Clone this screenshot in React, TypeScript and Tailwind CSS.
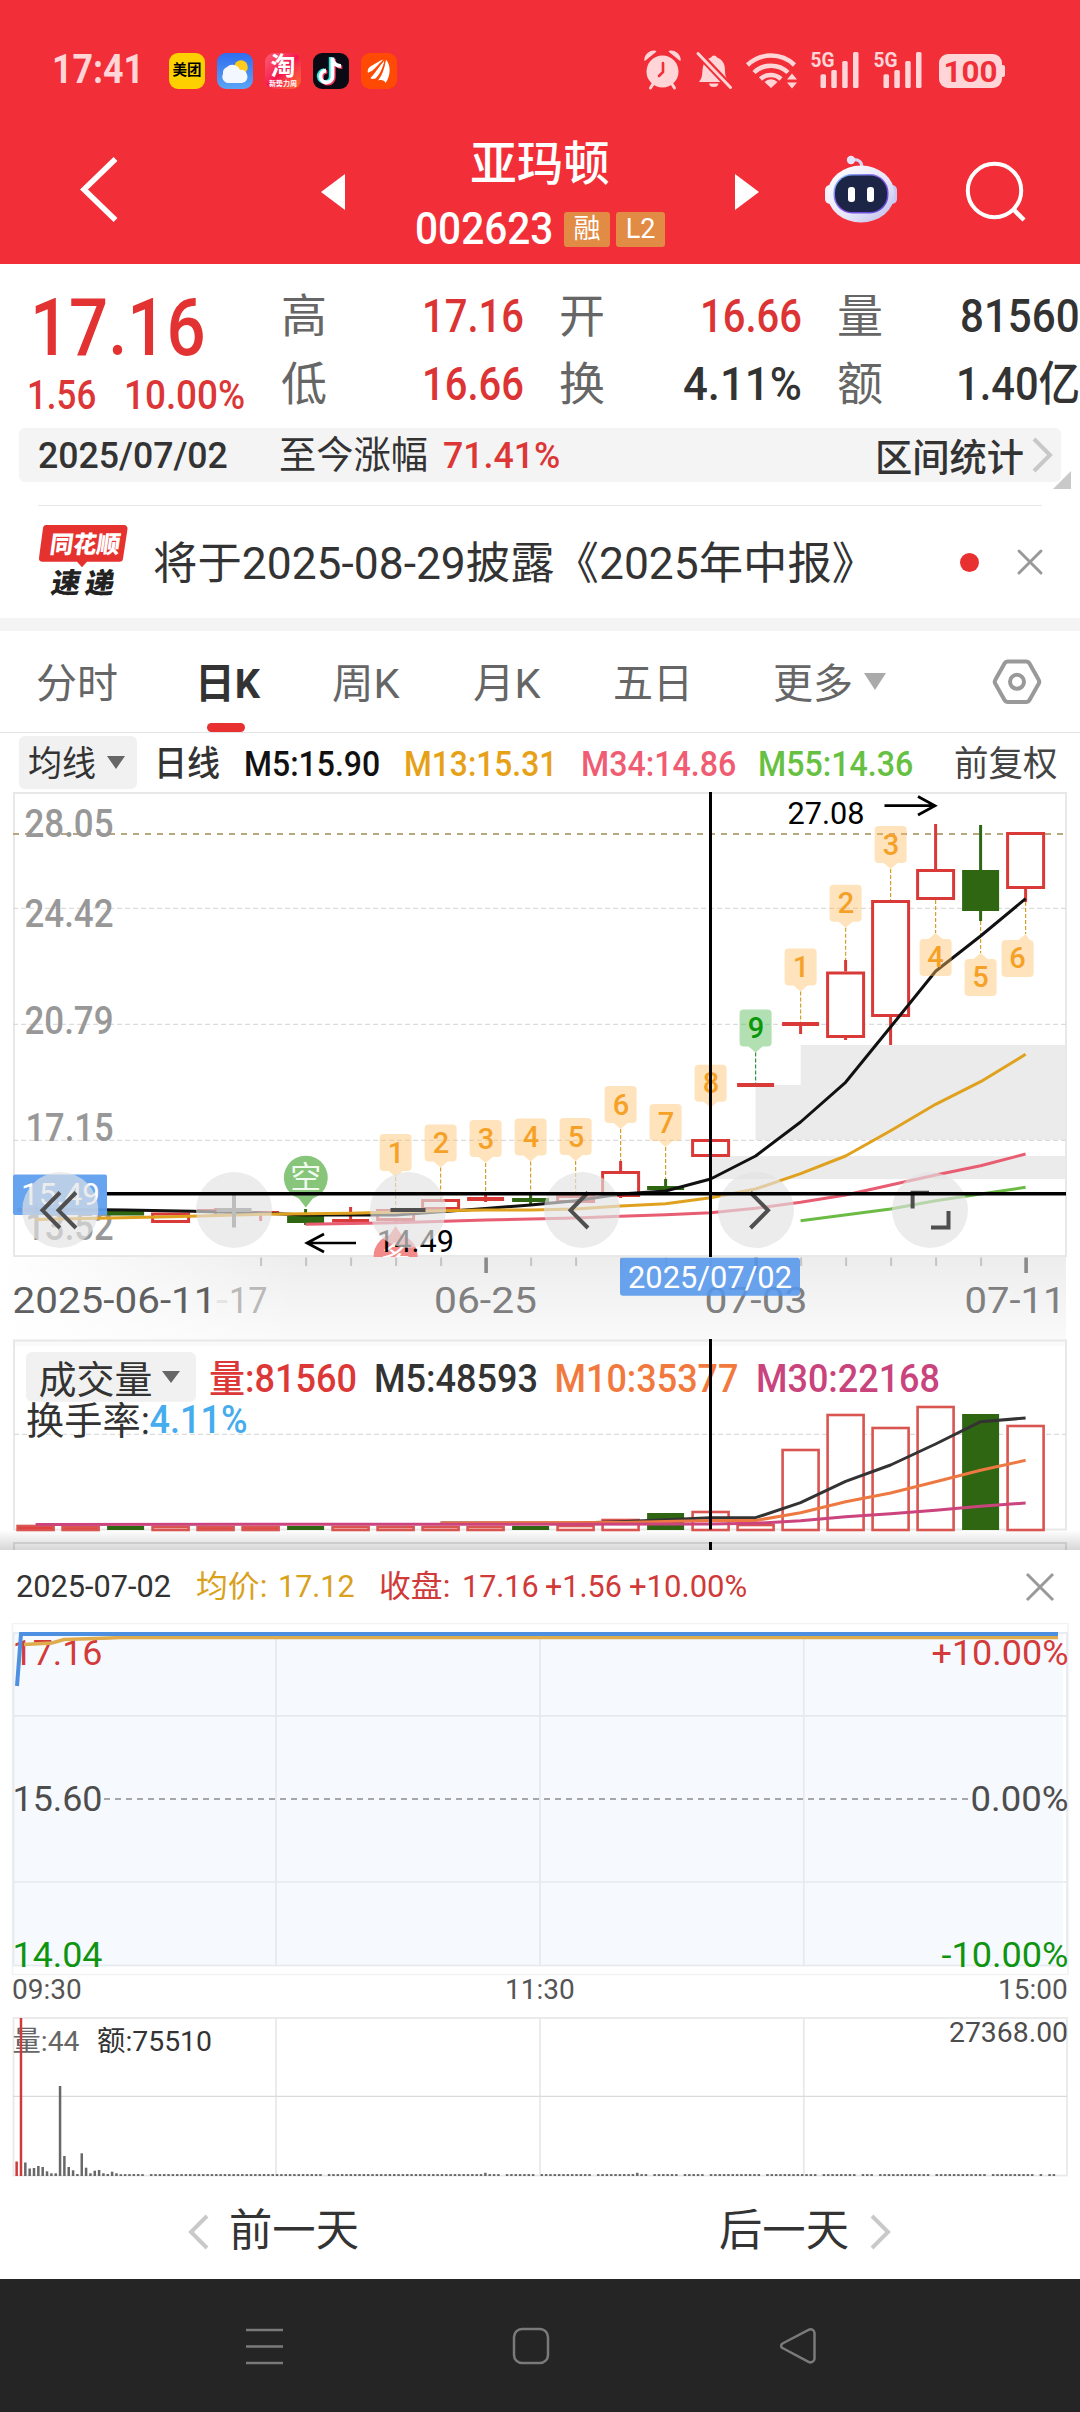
import { useLayoutEffect, useRef, useState, type ReactNode } from "react";

/** Text squeezed horizontally so that it fills a given width. */
function Fit({ w, className = "", children }: { w: number; className?: string; children: ReactNode }) {
  const ref = useRef<HTMLSpanElement>(null);
  const [scale, setScale] = useState(1);
  useLayoutEffect(() => {
    if (ref.current) setScale(w / ref.current.offsetWidth);
  }, [w]);
  return (
    <span className={`inline-flex shrink-0 ${className}`} style={{ width: w }}>
      <span ref={ref} className="inline-block shrink-0 origin-left whitespace-nowrap" style={{ transform: `scaleX(${scale})` }}>
        {children}
      </span>
    </span>
  );
}

type TProps = { x: number; y: number; s: number; w?: number; fill?: string; weight?: number; anchor?: "start" | "middle" | "end"; o?: number; children: string };
function T({ x, y, s, w, fill = "#333", weight = 400, anchor = "start", o = 1, children }: TProps) {
  return (
    <text x={x} y={y} fontSize={s} fill={fill} fontWeight={weight} textAnchor={anchor} opacity={o} {...(w ? { textLength: w, lengthAdjust: "spacingAndGlyphs" } : {})}>
      {children}
    </text>
  );
}

function StatusBar() {
  return (
    <div className="flex h-[124px] items-start pt-[53px]">
      <Fit w={92} className="ml-[52px] text-[40px] leading-[34px] font-bold text-[#ffd5d7]">17:41</Fit>
      <div className="ml-[25px] flex gap-3">
        <div className="flex h-9 w-9 items-center justify-center rounded-[9px] bg-[#ffd000] text-[14.5px] font-bold text-black">美团</div>
        <svg className="h-9 w-9 rounded-[9px]" viewBox="0 0 36 36">
          <defs>
            <linearGradient id="sky" x1="0" y1="0" x2="0" y2="1"><stop offset="0" stopColor="#2f6df0" /><stop offset="1" stopColor="#5aa5f5" /></linearGradient>
          </defs>
          <rect width="36" height="36" fill="url(#sky)" />
          <circle cx="24" cy="14" r="6.8" fill="#ffcb1f" />
          <path d="M11 30a6.200 6.200 0 0 1-5-9a6.500 6.500 0 0 1 4-7a8 8 0 0 1 13 3a5.500 5.500 0 0 1 7 4.500a6 6 0 0 1-5 8.500z" fill="#f3f7ff" />
        </svg>
        <div className="flex h-9 w-9 flex-col items-center overflow-hidden rounded-[9px] bg-[#f5204f] bg-linear-to-br from-[#ff5a72] via-[#f5104f] to-[#ff6a2a] text-white">
          <span className="text-[25px] leading-[27px] font-bold">淘</span>
          <span className="text-[7px] leading-[8px] font-bold whitespace-nowrap">新势力周</span>
        </div>
        <svg className="h-9 w-9 rounded-[9px]" viewBox="0 0 36 36">
          <rect width="36" height="36" fill="#0b0a14" />
          <g fill="none" strokeWidth="3.800" strokeLinecap="butt">
            <path d="M18.500 4.500V23a6 6 0 1 1-6.500-5.500M18.500 6c.6 4 4 7 8.500 7" stroke="#35e6df" transform="translate(-.8 -.4)" />
            <path d="M20.500 4.500V23a6 6 0 1 1-6.500-5.500M20.500 6c.6 4 4 7 8.500 7" stroke="#f43a5d" transform="translate(.3 1.200)" />
            <path d="M19.500 4.500V23a6 6 0 1 1-6.500-5.500M19.500 6c.6 4 4 7 8.500 7" stroke="#fff" />
          </g>
        </svg>
        <svg className="h-9 w-9 rounded-[9px]" viewBox="0 0 36 36">
          <rect width="36" height="36" fill="#ff4a05" />
          <path d="M7 20C6 16 8 14 12 12C16 10 19 7 23 6.500C18 10 16 14 12 17C10.500 18.500 8.500 18.500 7 20zM9.500 25C13 22 19 12 23.800 6.500C23 13 20.500 20 15 25C13.500 26 10.500 26.500 9.500 25zM17 27.500C21.500 22 24 14 24.800 6.500C29.500 11 30.500 22 24.500 30C23.500 27 20 26.500 17 27.500z" fill="#fff" />
          <path d="M10 21C15 17 19 11 23.500 6.500M15.500 26.500C20 20 23 13 24.300 6.500" stroke="#ff4a05" strokeWidth="1.200" fill="none" />
        </svg>
      </div>
      <svg className="-mt-[3px] ml-[243px] h-10 w-[370px] overflow-visible" viewBox="640 50 370 40" fill="#ffd5d7">
        <circle cx="662.500" cy="71.500" r="16" />
        <path d="M645 60a9 9 0 0 1 10.500-8.500zM680 60a9 9 0 0 0-10.500-8.500z" stroke="#ffd5d7" strokeWidth="1.500" strokeLinejoin="round" />
        <path d="M653 84l-2.500 4M672 84l2.500 4" stroke="#ffd5d7" strokeWidth="3" strokeLinecap="round" />
        <path d="M663 63v9l-4 4" fill="none" stroke="#f22f38" strokeWidth="2.600" strokeLinecap="round" />
        <path d="M699 82c3-4 3-6 3.500-12c.6-7 4-11 8.500-12.500a3.300 3.300 0 0 1 6 0c5 1.500 8 6 8 12.500c0 6 1 8 4 12z" />
        <path d="M709 83.500h9.500a4.800 4.200 0 0 1-9.500 0z" />
        <path d="M697 52l34 36" stroke="#f22f38" strokeWidth="7" />
        <path d="M698 53.500l32.500 34" stroke="#ffd5d7" strokeWidth="3" strokeLinecap="round" />
        <g fill="none" stroke="#ffd5d7" strokeWidth="4.500">
          <path d="M747.500 65a34 34 0 0 1 47 0" />
          <path d="M754 72.500a24.500 24.500 0 0 1 34 0" />
          <path d="M760.500 79a15 15 0 0 1 20.500 0" />
        </g>
        <path d="M764.500 82a9 9 0 0 1 13 0l-6.500 6zM787 79.500l5-6l5 6zM787 82.500l5 6l5-6z" />
        {[0, 63].map((d) => (
          <g key={d}>
            <T x={810.500 + d} y={66.800} s={21} w={24} fill="#ffd5d7" weight={700}>5G</T>
            <rect x={820.500 + d} y="74.300" width="5.500" height="13.700" rx="1.500" />
            <rect x={831.300 + d} y="70" width="5.500" height="18" rx="1.500" />
            <rect x={842.200 + d} y="61" width="5.500" height="27" rx="1.500" />
            <rect x={853 + d} y="52" width="5.500" height="36" rx="1.500" />
          </g>
        ))}
        <rect x="939" y="54" width="63" height="34" rx="9" />
        <path d="M1001 65h2a2 2 0 0 1 2 2v8a2 2 0 0 1-2 2h-2z" />
        <T x={943.500} y={82} s={30} w={54} fill="#f22f38" weight={700}>100</T>
      </svg>
    </div>
  );
}

function TitleBar() {
  return (
    <div className="flex h-[140px] text-white">
      <svg className="h-[140px] w-[366px] shrink-0" viewBox="0 124 366 140">
        <path d="M115.500 159L84 189.500L115.500 220" fill="none" stroke="#fff" strokeWidth="5.500" />
        <path d="M321 192L345 174V210z" fill="#fff" />
      </svg>
      <div className="flex w-[348px] shrink-0 flex-col items-center">
        <div className="mt-[15px] text-[46.500px] leading-[50px] font-medium">亚玛顿</div>
        <div className="mt-[17px] flex h-[46px] items-center">
          <Fit w={138} className="text-[45px] leading-[46px] font-medium">002623</Fit>
          <span className="ml-[11px] flex h-[35px] w-[46px] items-center justify-center rounded-[3px] bg-[#e28b45] text-[27px]">融</span>
          <span className="ml-[6px] flex h-[35px] w-[49px] items-center justify-center rounded-[3px] bg-[#e28b45] text-[27px]">L2</span>
        </div>
      </div>
      <svg className="h-[140px] w-[366px] shrink-0" viewBox="714 124 366 140">
        <defs>
          <linearGradient id="shell" x1="0" y1="0" x2="1" y2="1"><stop offset="0" stopColor="#fff" /><stop offset=".6" stopColor="#e6e4f8" /><stop offset="1" stopColor="#b9b8ea" /></linearGradient>
          <linearGradient id="rim" x1="0" y1="0" x2="1" y2="1"><stop offset="0" stopColor="#7cc8ff" /><stop offset=".5" stopColor="#8a55e6" /><stop offset="1" stopColor="#5a48d8" /></linearGradient>
        </defs>
        <path d="M759 192L735 174V210z" fill="#fff" />
        <path d="M851 160.500c7-2 11 1 11 7" fill="none" stroke="#d9d6f5" strokeWidth="3" />
        <circle cx="851" cy="160" r="4.200" fill="#e6e4fa" />
        <rect x="825" y="185" width="10" height="19" rx="5" fill="#f0effc" />
        <rect x="887" y="185" width="10" height="19" rx="5" fill="#c9c8f0" />
        <ellipse cx="861" cy="194" rx="33.500" ry="28.500" fill="url(#shell)" />
        <rect x="833.500" y="174" width="55" height="39.500" rx="18.500" fill="url(#rim)" />
        <rect x="835" y="175.500" width="52" height="36.500" rx="17" fill="#1d2547" />
        <rect x="848" y="187" width="7" height="15" rx="3" fill="#fff" />
        <rect x="867" y="187" width="7" height="15" rx="3" fill="#fff" />
        <circle cx="994.500" cy="190.500" r="26.700" fill="none" stroke="#fff" strokeWidth="4" />
        <path d="M1013.500 209.500l10.500 10.500" stroke="#fff" strokeWidth="4.500" />
      </svg>
    </div>
  );
}

type Cell = { label: string; value: ReactNode; w: number; red?: boolean };
const quoteRows: Cell[][] = [
  [
    { label: "高", value: "17.16", w: 102, red: true },
    { label: "开", value: "16.66", w: 102, red: true },
    { label: "量", value: "81560", w: 120 },
  ],
  [
    { label: "低", value: "16.66", w: 102, red: true },
    { label: "换", value: "4.11%", w: 119 },
    { label: "额", value: "1.40亿", w: 124 },
  ],
];

function Quote() {
  return (
    <section className="pt-[18px]">
      <div className="flex h-[136px]">
        <div className="w-[283px] shrink-0 text-[#e33232]">
          <Fit w={176} className="mt-px ml-[30px] text-[79px] leading-[90px] font-medium">17.16</Fit>
          <div className="flex text-[40.500px] leading-[44px] font-medium text-[#dc3636]">
            <Fit w={69} className="ml-[27px]">1.56</Fit>
            <Fit w={121} className="ml-[28px]">10.00%</Fit>
          </div>
        </div>
        <div className="w-[797px] shrink-0">
          {quoteRows.map((row, i) => (
            <div key={i} className="flex h-[68px] items-center gap-[37px]">
              {row.map((c) => (
                <div key={c.label} className="flex w-[241px] items-center justify-between text-[47px] leading-[68px]">
                  <span className="-ml-0.5 text-[46px] text-[#666]">{c.label}</span>
                  <Fit w={c.w} className={c.red ? "font-medium text-[#dc3434]" : "font-medium text-[#333]"}>{c.value}</Fit>
                </div>
              ))}
            </div>
          ))}
        </div>
      </div>
      <div className="relative mx-[19px] mt-[10px] flex h-[54px] items-center rounded-md bg-[#f4f4f4] text-[37.500px] leading-[54px] text-[#333]">
        <Fit w={190} className="ml-[19px] font-medium">2025/07/02</Fit>
        <Fit w={149} className="ml-[51px]">至今涨幅</Fit>
        <Fit w={117} className="ml-[15px] font-medium text-[#dc3636]">71.41%</Fit>
        <Fit w={149} className="mt-1.5 ml-auto font-medium">区间统计</Fit>
        <svg className="mr-[6px] ml-[7px] h-[36px] w-[24px]" viewBox="0 0 24 36" fill="none" stroke="#c8c8c8" strokeWidth="4"><path d="M3 2l16 16L3 34" /></svg>
        <svg className="absolute -right-[10px] -bottom-[7px] h-[18px] w-[18px]" viewBox="0 0 18 18"><path d="M18 0v18H0z" fill="#c9c9c9" /></svg>
      </div>
      <div className="mx-[38px] mt-[23px] h-px bg-[#e8e8e8]" />
      <div className="flex h-[112px] items-center">
        <svg className="ml-[36px] h-[80px] w-[94px] shrink-0" viewBox="36 522 94 80">
          <path d="M46 525h78a3.500 3.500 0 0 1 3.500 4l-4.500 29.500a3.500 3.500 0 0 1-3.500 3.200H87l-5 5.500l-5-5.500H42a3.500 3.500 0 0 1-3-4l4-29.500a3.500 3.500 0 0 1 3-3.200z" fill="#e5322f" />
          <g transform="translate(49 553) skewX(-8)"><T x={0} y={0} s={24} w={70} fill="#fff" weight={900}>同花顺</T></g>
          <g transform="translate(50 593) skewX(-10)"><T x={0} y={0} s={28} w={29} fill="#222" weight={900}>速</T><T x={34} y={0} s={28} w={29} fill="#222" weight={900}>递</T></g>
        </svg>
        <Fit w={723} className="mt-1 ml-[23px] text-[44.500px] leading-[60px] text-[#333]">将于2025-08-29披露《2025年中报》</Fit>
        <span className="ml-[84px] h-[19px] w-[19px] shrink-0 rounded-full bg-[#e93030]" />
        <svg className="ml-[37px] h-[28px] w-[28px] shrink-0" viewBox="0 0 28 28" stroke="#999" strokeWidth="3" strokeLinecap="round"><path d="M3 3l22 22M25 3L3 25" /></svg>
      </div>
      <div className="h-[13px] bg-[#f4f4f4]" />
    </section>
  );
}

function Tabs() {
  return (
    <nav className="flex h-[102px] items-center border-b border-[#e4e4e4] text-[41px] text-[#666]">
      <Fit w={82} className="mt-1.5 ml-[36px]">分时</Fit>
      <div className="relative ml-[77px] flex h-full items-center font-bold text-[#333]">
        <Fit w={65} className="mt-1.5">日K</Fit>
        <span className="absolute bottom-0 left-[12px] h-[9px] w-[38px] rounded-full bg-[#e93030]" />
      </div>
      <Fit w={68} className="mt-1.5 ml-[72px]">周K</Fit>
      <Fit w={68} className="mt-1.5 ml-[73px]">月K</Fit>
      <Fit w={80} className="mt-1.5 ml-[72px]">五日</Fit>
      <Fit w={80} className="mt-1.5 ml-[80px]">更多</Fit>
      <svg className="ml-[10px] h-[19px] w-[24px]" viewBox="0 0 24 19"><path d="M1 1h22L12 18z" fill="#aaa" /></svg>
      <svg className="ml-[104px] h-[50px] w-[52px]" viewBox="992 657 52 50" fill="none" stroke="#999" strokeWidth="4">
        <path d="M1009 661.500h18a4 4 0 0 1 3.500 2l9 16a4 4 0 0 1 0 4.500l-9 16a4 4 0 0 1-3.500 2h-18a4 4 0 0 1-3.500-2l-9-16a4 4 0 0 1 0-4.500l9-16a4 4 0 0 1 3.500-2z" />
        <circle cx="1018" cy="681.800" r="7" />
      </svg>
    </nav>
  );
}

function MaRow() {
  return (
    <div className="flex h-[59px] items-center text-[35.500px] leading-[59px] font-medium whitespace-nowrap">
      <div className="ml-[19px] flex h-[53px] w-[118px] items-center rounded-md bg-[#f1f1f1] font-normal text-[#333]">
        <Fit w={68} className="mt-[3px] ml-[9px]">均线</Fit>
        <svg className="ml-[10px] h-[13px] w-[20px]" viewBox="0 0 20 13"><path d="M1 0h18L10 13z" fill="#666" /></svg>
      </div>
      <Fit w={66} className="mt-1 ml-[17px] text-[#333]">日线</Fit>
      <Fit w={136} className="mt-1 ml-[24px] text-[#111]">M5:15.90</Fit>
      <Fit w={153} className="mt-1 ml-[24px] text-[#e6a117]">M13:15.31</Fit>
      <Fit w={155} className="mt-1 ml-[24px] text-[#f05d72]">M34:14.86</Fit>
      <Fit w={155} className="mt-1 ml-[22px] text-[#66c041]">M55:14.36</Fit>
      <Fit w={104} className="mt-[3px] ml-[41px] font-normal text-[#444]">前复权</Fit>
    </div>
  );
}

/* Day positions run from right (0) to left (22). */
const cx = (k: number) => 1025.6 - 45 * k;
const pts = (list: [number, number][]) => list.map(([k, y]) => `${cx(k).toFixed(1)},${y}`).join(" ");

const UP = "#d93a38";
const DOWN = "#2f6612";

type Candle = { k: number; hi: number; top: number; bottom: number; lo: number; kind: "up" | "down" | "flat" };
const candles: Candle[] = [
  { k: 0, hi: 832, top: 832, bottom: 889, lo: 902, kind: "up" },
  { k: 1, hi: 825, top: 870, bottom: 911, lo: 921, kind: "down" },
  { k: 2, hi: 824, top: 869, bottom: 900, lo: 900, kind: "up" },
  { k: 3, hi: 900, top: 900, bottom: 1017, lo: 1045, kind: "up" },
  { k: 4, hi: 960, top: 971.5, bottom: 1038, lo: 1040, kind: "up" },
  { k: 5, hi: 1022, top: 1022, bottom: 1026, lo: 1034, kind: "flat" },
  { k: 6, hi: 1083, top: 1083, bottom: 1087, lo: 1087, kind: "flat" },
  { k: 7, hi: 1139, top: 1139, bottom: 1157, lo: 1157, kind: "up" },
  { k: 8, hi: 1179, top: 1186, bottom: 1190, lo: 1190, kind: "down" },
  { k: 9, hi: 1161, top: 1171, bottom: 1197, lo: 1198, kind: "up" },
  { k: 10, hi: 1195, top: 1195, bottom: 1203, lo: 1203, kind: "up" },
  { k: 11, hi: 1195, top: 1198, bottom: 1202, lo: 1204, kind: "down" },
  { k: 12, hi: 1195, top: 1197, bottom: 1201, lo: 1202, kind: "flat" },
  { k: 13, hi: 1199, top: 1199, bottom: 1210, lo: 1210, kind: "up" },
  { k: 14, hi: 1209, top: 1209, bottom: 1221, lo: 1224, kind: "up" },
  { k: 15, hi: 1207, top: 1219, bottom: 1222.5, lo: 1222, kind: "flat" },
  { k: 16, hi: 1209, top: 1216, bottom: 1223, lo: 1225, kind: "down" },
  { k: 17, hi: 1211, top: 1211, bottom: 1213.5, lo: 1221, kind: "flat" },
  { k: 18, hi: 1208, top: 1209, bottom: 1212, lo: 1217, kind: "flat" },
  { k: 19, hi: 1212.5, top: 1212.5, bottom: 1223, lo: 1223, kind: "up" },
  { k: 20, hi: 1211, top: 1211, bottom: 1215.5, lo: 1215, kind: "down" },
  { k: 21, hi: 1208, top: 1209, bottom: 1212, lo: 1212, kind: "flat" },
  { k: 22, hi: 1204, top: 1208, bottom: 1212, lo: 1213, kind: "flat" },
];

const tagsAbove: [string, number, number, number][] = [
  ["1", 14, 1134, 1209], ["2", 13, 1124.5, 1199], ["3", 12, 1120, 1195], ["4", 11, 1118.5, 1195],
  ["5", 10, 1118, 1195], ["6", 9, 1086, 1161], ["7", 8, 1104, 1179], ["8", 7, 1064.7, 1139],
  ["9", 6, 1009.500, 1084], ["1", 5, 948.5, 1022], ["2", 4, 884.7, 960], ["3", 3, 826, 900],
];
const tagsBelow: [string, number, number, number, number][] = [
  ["4", 2, 900, 939, 0], ["5", 1, 921, 959, 0], ["6", 0, 902, 940, -8],
];

const volumes: [number, number, "up" | "down" | "full"][] = [
  [0, 1425, "up"], [1, 1414, "down"], [2, 1406, "up"], [3, 1427, "up"], [4, 1414, "up"], [5, 1449, "up"],
  [6, 1524, "up"], [7, 1511, "up"], [8, 1513, "down"], [9, 1519, "up"], [10, 1525, "up"], [11, 1526, "down"],
  [12, 1526, "up"], [13, 1526, "up"], [14, 1526, "up"], [15, 1526, "up"], [16, 1526, "down"], [17, 1526, "full"],
  [18, 1526, "full"], [19, 1526, "up"], [20, 1526, "down"], [21, 1526, "full"], [22, 1525, "full"],
];

const circleX = [60.3, 234, 408, 582, 756, 930];

function KChart() {
  return (
    <svg className="block h-[758px] w-[1080px]" viewBox="0 792 1080 758">
      <defs>
        <linearGradient id="axisShade" x1="0" y1="0" x2="0" y2="1"><stop offset="0" stopColor="#ededed" /><stop offset="1" stopColor="#fbfbfb" /></linearGradient>
        <linearGradient id="axisFade" x1="0" y1="0" x2="1" y2="0"><stop offset="0" stopColor="#fff" /><stop offset="1" stopColor="#fff" stopOpacity="0" /></linearGradient>
        <linearGradient id="sheetShade" x1="0" y1="0" x2="0" y2="1"><stop offset="0" stopColor="#000" stopOpacity="0" /><stop offset="1" stopColor="#000" stopOpacity=".16" /></linearGradient>
        <clipPath id="plot"><rect x="13" y="792" width="1054" height="465" /></clipPath>
      </defs>

      <g fill="#ebebeb">
        <path d="M800.700 1045H1066V1140H755.500V1085H800.700z" />
        <rect x="710.500" y="1156" width="355.500" height="23" />
      </g>
      <rect x="14" y="793" width="1052" height="463" fill="none" stroke="#e8e8e8" strokeWidth="2" />
      <g stroke="#dcdcdc" strokeWidth="1.300" strokeDasharray="5 3">
        {[908.3, 1024.3, 1140.3].map((y) => <path key={y} d={`M13 ${y}H1066`} />)}
      </g>
      <path d="M13 834H1066" stroke="#b8a67c" strokeWidth="2" strokeDasharray="6 6" />

      <g>
        <T x={24.5} y={837.3} s={38} w={89} fill="#989898" weight={500}>28.05</T>
        <T x={24.5} y={927} s={38} w={89} fill="#989898" weight={500}>24.42</T>
        <T x={24.5} y={1034} s={38} w={89} fill="#989898" weight={500}>20.79</T>
        <T x={25.5} y={1141} s={38} w={88} fill="#989898" weight={500}>17.15</T>
        <T x={25.5} y={1239.5} s={38} w={88} fill="#989898" weight={500}>13.52</T>
      </g>

      {candles.map((c) => {
        const x = cx(c.k);
        if (c.kind === "up")
          return (
            <g key={c.k} stroke={UP} strokeWidth="3" fill="none">
              <path d={`M${x} ${c.hi}V${c.top}M${x} ${c.bottom}V${c.lo}`} />
              <rect x={x - 18} y={c.top + 1.5} width="36" height={c.bottom - c.top - 3} fill="#fff" />
            </g>
          );
        const color = c.kind === "down" ? DOWN : UP;
        return (
          <g key={c.k}>
            <path d={`M${x} ${c.hi}V${c.lo}`} stroke={color} strokeWidth="3" />
            <rect x={x - 18.500} y={c.top} width="37" height={c.bottom - c.top} fill={color} />
          </g>
        );
      })}

      <g strokeWidth="1.200" strokeDasharray="4 2">
        {tagsAbove.map(([n, k, y, to]) => <path key={k} d={`M${cx(k)} ${y + 43}V${to}`} stroke={n === "9" ? "#2e9434" : "#d3a02c"} />)}
        {tagsBelow.map(([, k, from, y]) => <path key={k} d={`M${cx(k)} ${from}V${y - 6}`} stroke="#d3a02c" />)}
      </g>

      <g fill="none" strokeWidth="3" strokeLinejoin="round">
        <polyline stroke="#111" points={pts([[22, 1209], [20, 1210], [18.5, 1211.3], [17, 1213], [16, 1215], [14, 1215], [13, 1211.7], [12, 1208.5], [11, 1205], [10, 1200.700], [9, 1194], [8, 1191], [7, 1179], [6, 1156], [5, 1122], [4, 1082.300], [3, 1027], [2, 971.3], [1, 936], [0, 898.7]])} />
        <polyline stroke="#e0a11e" points={pts([[22, 1219.500], [19, 1216.7], [17, 1214.300], [15, 1213.300], [13, 1210.700], [12, 1210], [11, 1210], [10, 1209], [9, 1206], [8, 1203.7], [7, 1197.7], [6, 1189], [5, 1173.7], [4, 1156], [3, 1130.7], [2, 1104.3], [1, 1081.7], [0, 1054.3]])} />
        <polyline stroke="#e85d72" points={pts([[16, 1224.3], [14, 1222.7], [12, 1220], [11, 1219], [10, 1218], [9, 1216.3], [8, 1214.7], [7, 1212.7], [6, 1208.3], [5, 1202.3], [4, 1195], [3, 1185], [2, 1175], [1, 1165.7], [0, 1154]])} />
        <polyline stroke="#6bbb45" points={pts([[5, 1220.7], [3, 1209], [2, 1200.7], [1, 1194], [0, 1187.3]])} />
      </g>

      <g fill="none" stroke="#000" strokeWidth="2.700">
        <path d="M356 1243H307M324 1234L307 1243L324 1252" />
        <path d="M884.500 805.700H935M918 796.500L935 805.700L918 815" />
      </g>
      <T x={787.500} y={824} s={30.500} w={77} fill="#000">27.08</T>

      <g clipPath="url(#plot)">
        <path d="M395.600 1226l6 9a22 22 0 1 1-12 0z" fill="#f38a8a" />
        <T x={395.6} y={1268} s={30} fill="#fff" anchor="middle">多</T>
      </g>
      <T x={377} y={1251.700} s={30.500} w={77} fill="#000">14.49</T>
      <path d="M305.800 1207.500l-7-9a22 22 0 1 1 14 0z" fill="#86c57a" />
      <T x={305.8} y={1188} s={31} fill="#f2fbf0" anchor="middle">空</T>

      {tagsAbove.map(([n, k, y]) => {
        const x = cx(k);
        const green = n === "9";
        return (
          <g key={k}>
            <path d={`M${x - 12} ${y}h24a4 4 0 0 1 4 4v29a4 4 0 0 1-4 4h-5l-7 6l-7-6h-5a4 4 0 0 1-4-4v-29a4 4 0 0 1 4-4z`} fill={green ? "#6cc46c" : "#ffbe66"} opacity={green ? 0.52 : 0.43} />
            <T x={x + 0.5} y={y + 28.5} s={29} fill={green ? "#0a970a" : "#f5a127"} weight={500} anchor="middle">{n}</T>
          </g>
        );
      })}
      {tagsBelow.map(([n, k, , y, dx]) => {
        const x = cx(k) + dx;
        return (
          <g key={k}>
            <path d={`M${x - 12} ${y}h${5 - dx}l7 -6l${dx ? 4 : 7} 6h${dx ? 0 : 5}a4 4 0 0 1 4 4v29a4 4 0 0 1-4 4h-24a4 4 0 0 1-4-4v-29a4 4 0 0 1 4-4z`} fill="#ffbe66" opacity=".43" />
            <T x={x} y={y + 28} s={29} fill="#f5a127" weight={500} anchor="middle">{n}</T>
          </g>
        );
      })}

      <rect x="13" y="1174.500" width="94" height="40.500" rx="2" fill="#5f9fee" fillOpacity=".95" />
      <T x={21} y={1204.500} s={31} w={79} fill="#fff">15.49</T>

      {circleX.map((x) => <circle key={x} cx={x} cy="1210" r="38" fill="#e2e2e2" fillOpacity=".66" />)}
      <g fill="none" stroke="#4f4f4f" strokeWidth="4">
        <path d="M60 1192.500L42.500 1210.300L60 1228M76 1192.500L58.500 1210.300L76 1228" />
        <path d="M390.500 1210H425.500" />
        <path d="M588 1192.500L570.500 1210.300L588 1228" />
        <path d="M750.500 1192.500L768 1210.300L750.500 1228" />
        <path d="M929 1192.800H912.600V1208.500M931 1227.500H948.500V1211" />
        <path d="M216.500 1210H251.500M234 1192.500V1227.500" stroke="#bdbdbd" />
      </g>

      {/* date axis */}
      <rect x="0" y="1257" width="1066" height="89" fill="url(#axisShade)" />
      <rect x="0" y="1257" width="300" height="89" fill="url(#axisFade)" />
      <rect x="14" y="1341" width="1052" height="5" fill="#fafafa" />
      {Array.from({ length: 18 }, (_, k) => {
        const big = k === 0 || k === 6 || k === 12;
        return <rect key={k} x={cx(k) - (big ? 1.3 : 0.5)} y="1257.500" width={big ? 3.6 : 2} height={big ? 15.5 : 8.5} fill={big ? "#8a8a8a" : "#c4c4c4"} />;
      })}
      <T x={12.5} y={1312.5} s={36.500} w={204} fill="#606060">2025-06-11</T>
      <T x={216} y={1312.5} s={36.500} w={12} fill="#e4e4e4">-</T>
      <T x={229} y={1312.5} s={36.500} w={38.5} fill="#b9b9b9">17</T>
      <T x={434} y={1312.5} s={36.500} w={103} fill="#808080">06-25</T>
      <T x={704.5} y={1312.5} s={36.500} w={103} fill="#808080">07-03</T>
      <T x={964.500} y={1312.5} s={36.500} w={101} fill="#808080">07-11</T>
      <rect x="620" y="1257.700" width="180" height="38" rx="3" fill="#5596eb" fillOpacity=".88" />
      <T x={628} y={1287.700} s={30.500} w={164} fill="#fff">2025/07/02</T>

      {/* volume pane */}
      <rect x="14" y="1340.500" width="1052" height="189" fill="none" stroke="#e8e8e8" strokeWidth="2" />
      <path d="M14 1434.300H1066" stroke="#dcdcdc" strokeWidth="1.300" strokeDasharray="5 3" />
      {volumes.map(([k, y, kind]) =>
        kind === "down" ? (
          <rect key={k} x={cx(k) - 18.500} y={y} width="37" height={1530 - y} fill={DOWN} />
        ) : (
          <rect key={k} x={cx(k) - 18} y={y + 1} width="36" height={1529 - y} fill={kind === "full" ? "#e33a3a" : "#fff"} stroke="#d95550" strokeWidth="2.600" />
        ),
      )}
      <g fill="none" strokeWidth="3" strokeLinejoin="round">
        <polyline stroke="#333" points={pts([[13, 1523], [10, 1523], [9, 1521.7], [8, 1519.7], [7, 1517.7], [6, 1517.7], [5, 1502.7], [4, 1481.3], [3, 1465], [2, 1444], [1, 1421.7], [0, 1418]])} />
        <polyline stroke="#ee7842" points={pts([[13, 1523], [9, 1522.500], [7, 1520.5], [6, 1520.5], [5, 1512.7], [4, 1501.7], [3, 1493], [2, 1481.7], [1, 1470.3], [0, 1460.3]])} />
        <polyline stroke="#cb447d" points={pts([[22, 1524.5], [7, 1524], [6, 1523.3], [5, 1520.7], [4, 1516.7], [3, 1513.7], [2, 1510.3], [1, 1506.3], [0, 1503]])} />
      </g>
      <rect x="26" y="1352" width="170" height="49.700" rx="6" fill="#f1f1f1" />
      <T x={38.5} y={1392.5} s={38} w={114} fill="#333">成交量</T>
      <path d="M162 1371h18l-9 12z" fill="#666" />
      <T x={209} y={1391.500} s={38} w={148} fill="#dd3838" weight={500}>量:81560</T>
      <T x={374} y={1391.500} s={38} w={164} fill="#333" weight={500}>M5:48593</T>
      <T x={554.500} y={1391.500} s={38} w={184} fill="#f2793e" weight={500}>M10:35377</T>
      <T x={756} y={1391.500} s={38} w={184} fill="#c9437c" weight={500}>M30:22168</T>
      <T x={26} y={1434} s={38} w={124} fill="#333">换手率:</T>
      <T x={149.500} y={1433.300} s={38} w={98} fill="#45acee" weight={500}>4.11%</T>

      <path d="M14 1550V1543H1066V1550" fill="none" stroke="#e4e4e4" strokeWidth="2" />
      <g stroke="#000" fill="none">
        <path d="M107 1193.700H1066" strokeWidth="3.600" />
        <path d="M710.500 792V1257M710.500 1339V1529.500M710.500 1542V1550" strokeWidth="3" />
      </g>
      <rect x="0" y="1530" width="1080" height="20" fill="url(#sheetShade)" />
    </svg>
  );
}

function IntradayHeader() {
  return (
    <div className="flex h-[73px] items-center text-[30.500px] leading-[75px] whitespace-nowrap">
      <Fit w={155} className="ml-[16px] text-[#333]">2025-07-02</Fit>
      <Fit w={71} className="ml-[25px] text-[#d9a11c]">均价:</Fit>
      <Fit w={77} className="ml-[11px] text-[#d9a11c]">17.12</Fit>
      <Fit w={71} className="ml-[24px] text-[#d03a38]">收盘:</Fit>
      <Fit w={77} className="ml-[12px] text-[#d03a38]">17.16</Fit>
      <Fit w={77} className="ml-[6px] text-[#d03a38]">+1.56</Fit>
      <Fit w={118} className="ml-[7px] text-[#d03a38]">+10.00%</Fit>
      <svg className="mr-[25px] ml-auto h-[30px] w-[30px]" viewBox="0 0 30 30" stroke="#999" strokeWidth="3"><path d="M2 2l26 26M28 2L2 28" /></svg>
    </div>
  );
}

const gridX = [276, 540, 803.8];

function IntradayPrice() {
  return (
    <svg className="block h-[353px] w-[1080px]" viewBox="0 1623 1080 353">
      <rect x="12.500" y="1623.500" width="1055.500" height="351" fill="none" stroke="#f2f2f2" strokeWidth="1.500" />
      <rect x="13" y="1633" width="1050" height="333" fill="#f6f9fe" />
      <g stroke="#e6e9ee" strokeWidth="1.700" fill="none">
        <rect x="13.500" y="1633" width="1053.500" height="332.500" />
        {gridX.map((x) => <path key={x} d={`M${x} 1633V1966`} />)}
        <path d="M13 1715.800H1067M13 1882H1067" />
      </g>
      <path d="M104 1799H970" stroke="#8c8c8c" strokeWidth="1.500" strokeDasharray="6 5" />
      <T x={12.500} y={1664.500} s={34.500} w={90} fill="#d33b3a">17.16</T>
      <T x={12.500} y={1810.500} s={34.500} w={90} fill="#4d4d4d">15.60</T>
      <T x={12.500} y={1966.500} s={34.500} w={90} fill="#0f9410">14.04</T>
      <T x={1068.500} y={1664.500} s={34.500} w={137} fill="#d33b3a" anchor="end">+10.00%</T>
      <T x={1068.500} y={1810.500} s={34.500} w={98} fill="#4d4d4d" anchor="end">0.00%</T>
      <T x={1068.500} y={1966.500} s={34.500} w={127} fill="#0f9410" anchor="end">-10.00%</T>
      <path d="M24 1644.500L52 1643L64 1639.500L110 1638L120 1637.500H1058" fill="none" stroke="#dfab4c" strokeWidth="3.500" />
      <path d="M17 1686L21 1634H1058" fill="none" stroke="#4d90e2" strokeWidth="4" />
    </svg>
  );
}

const bars = [14.5, 158, 13.5, 7.5, 8, 10, 9, 4.7, 2.7, 2.7, 90, 20, 9, 5.7, 2, 22.7, 8.300, 2.7, 5.3, 6, 2.7, 2, 4.3, 2.7, 1.8];

function IntradayVolume() {
  return (
    <svg className="block h-[180px] w-[1080px]" viewBox="0 2004 1080 180">
      <g stroke="#e9e9e9" strokeWidth="1.800" fill="none">
        <rect x="13.500" y="2018" width="1053.500" height="157.500" />
        {gridX.map((x) => <path key={x} d={`M${x} 2018V2175`} />)}
        <path d="M13 2096.300H1067" stroke="#dadada" strokeWidth="1.200" />
      </g>
      <T x={12.5} y={2051} s={28} w={67} fill="#666">量:44</T>
      <T x={97} y={2051} s={28} w={115} fill="#333">额:75510</T>
      <T x={1068} y={2042} s={28} w={119} fill="#4d4d4d" anchor="end">27368.00</T>
      {Array.from({ length: 240 }, (_, i) => {
        const h = i < bars.length ? bars[i] : (i * 7) % 41 === 5 || (i > 110 && (i * 5) % 13 === 2) ? 0 : i === 108 || i === 143 ? 3.2 : 1.9;
        return <rect key={i} x={15.4 + i * 4.34} y={2176 - h} width="2.500" height={h} fill={i < 2 ? "#cf3a3a" : "#686868"} />;
      })}
    </svg>
  );
}

export default function App() {
  return (
    <main className="flex h-[2412px] w-[1080px] flex-col overflow-hidden bg-white font-['Roboto','Noto_Sans_CJK_SC',sans-serif]">
      <header className="h-[264px] shrink-0 bg-[#f22f38]">
        <StatusBar />
        <TitleBar />
      </header>
      <Quote />
      <Tabs />
      <MaRow />
      <KChart />
      <section className="bg-white">
        <IntradayHeader />
        <IntradayPrice />
        <div className="flex h-[28px] items-center justify-between px-[12px] text-[28px] leading-[30px] text-[#555]">
          <Fit w={70}>09:30</Fit>
          <Fit w={70}>11:30</Fit>
          <Fit w={70}>15:00</Fit>
        </div>
        <IntradayVolume />
        <div className="flex h-[95px] items-center text-[44px] leading-[93px] text-[#333]">
          <svg className="ml-[187px] h-[36px] w-[22px]" viewBox="0 0 22 36" fill="none" stroke="#c9c9c9" strokeWidth="4"><path d="M20 2L4 18L20 34" /></svg>
          <Fit w={130} className="ml-[20px]">前一天</Fit>
          <Fit w={130} className="ml-[360px]">后一天</Fit>
          <svg className="ml-[21px] h-[36px] w-[22px]" viewBox="0 0 22 36" fill="none" stroke="#c9c9c9" strokeWidth="4"><path d="M2 2L18 18L2 34" /></svg>
        </div>
      </section>
      <footer className="h-[133px] shrink-0 bg-[#252525]">
        <svg className="block h-[133px] w-[1080px]" viewBox="0 2279 1080 133" fill="none" stroke="#7a7a7a" strokeWidth="2.500">
          <path d="M246 2330H283M246 2346.500H283M246 2363H283" />
          <rect x="514" y="2329" width="34" height="34" rx="8" />
          <path d="M782.500 2343.500L808.500 2329.800a4 4 0 0 1 6 3v26a4 4 0 0 1-6 3L782.500 2348a2.500 2.500 0 0 1 0-4.500z" />
        </svg>
      </footer>
    </main>
  );
}
